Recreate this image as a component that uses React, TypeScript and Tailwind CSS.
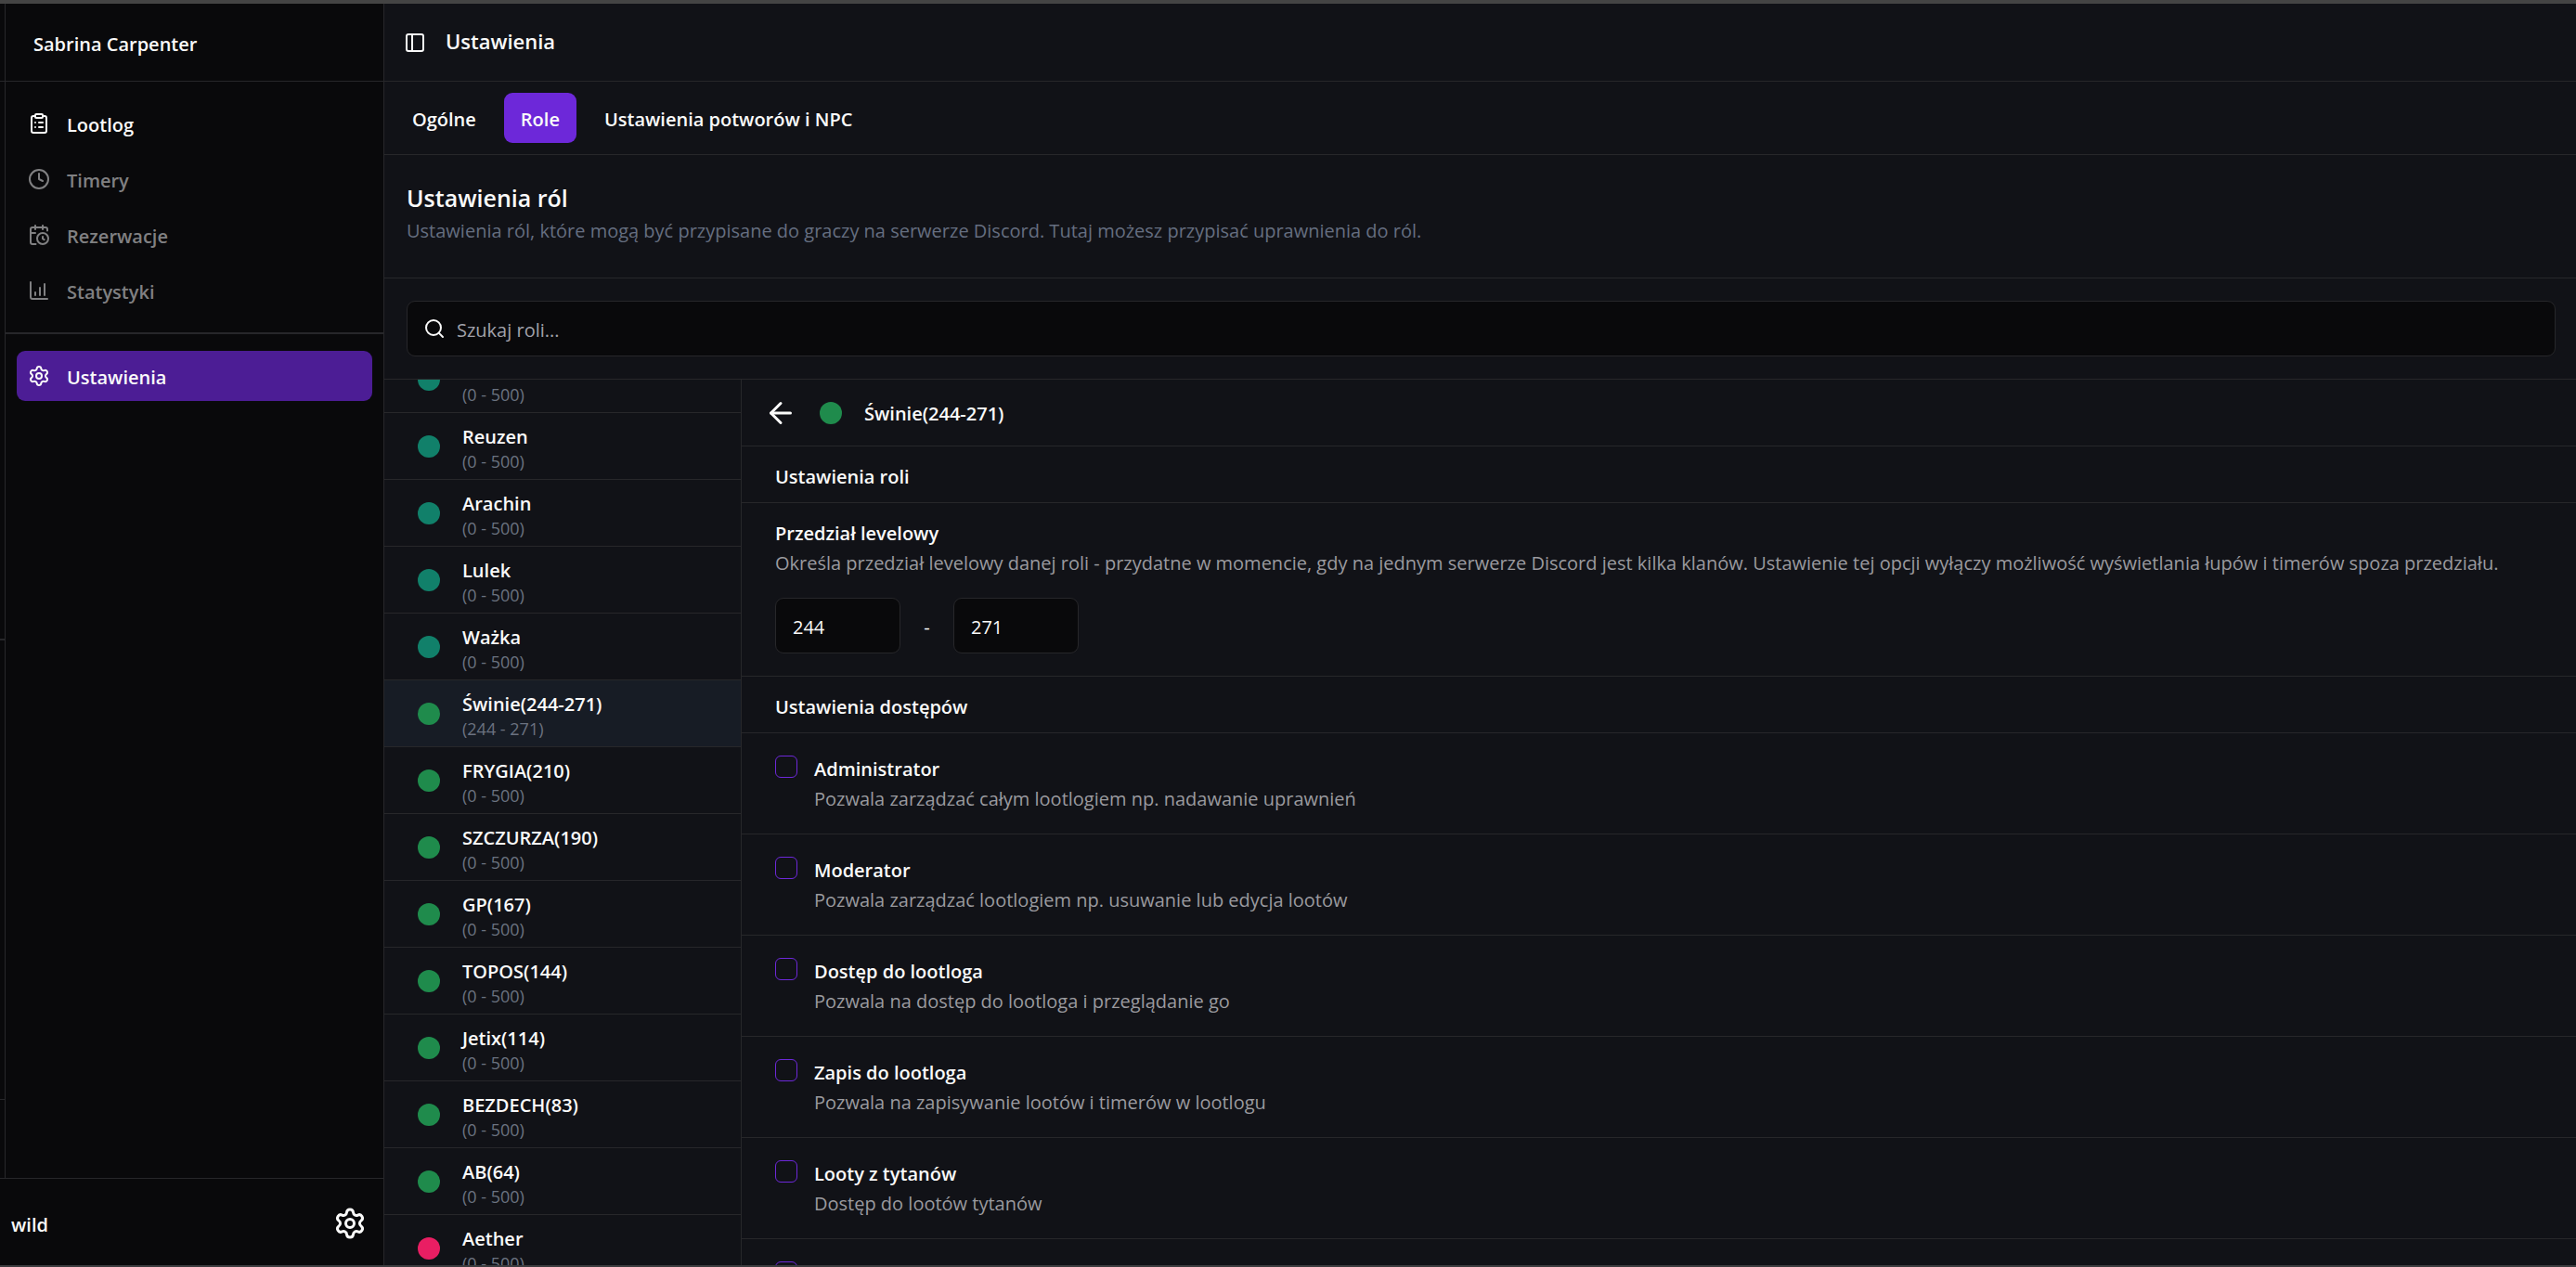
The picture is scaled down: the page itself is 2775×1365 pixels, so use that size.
import * as React from "react";
import {
  ArrowLeft,
  CalendarClock,
  ClipboardList,
  Clock,
  PanelLeft,
  Search,
  Settings,
} from "lucide-react";
import { clsx } from "clsx";

interface NavItem {
  label: string;
  icon: React.ReactNode;
  muted?: boolean;
}

interface Role {
  name: string;
  range: string;
  color: "teal" | "green" | "pink";
}

interface Permission {
  id: string;
  title: string;
  description: string;
}

function StatsIcon() {
  return (
    <svg
      viewBox="0 0 24 24"
      className="size-6 shrink-0"
      fill="none"
      stroke="currentColor"
      strokeWidth="2"
      strokeLinecap="round"
      strokeLinejoin="round"
    >
      <path d="M3 3v16a2 2 0 0 0 2 2h16" />
      <path d="M8 17v-3" />
      <path d="M13 17V9" />
      <path d="M18 17V5" />
    </svg>
  );
}

// Cog used both by the server settings link and the account button.
// Classic six-tooth outline.
function CogIcon({ className }: { className?: string }) {
  return <Settings className={clsx("shrink-0", className)} />;
}

const navItems: NavItem[] = [
  { label: "Lootlog", icon: <ClipboardList className="size-6 shrink-0" /> },
  { label: "Timery", icon: <Clock className="size-6 shrink-0" />, muted: true },
  { label: "Rezerwacje", icon: <CalendarClock className="size-6 shrink-0" />, muted: true },
  { label: "Statystyki", icon: <StatsIcon />, muted: true },
];

const tabs = ["Ogólne", "Role", "Ustawienia potworów i NPC"];

const roles: Role[] = [
  { name: "", range: "(0 - 500)", color: "teal" },
  { name: "Reuzen", range: "(0 - 500)", color: "teal" },
  { name: "Arachin", range: "(0 - 500)", color: "teal" },
  { name: "Lulek", range: "(0 - 500)", color: "teal" },
  { name: "Ważka", range: "(0 - 500)", color: "teal" },
  { name: "Świnie(244-271)", range: "(244 - 271)", color: "green" },
  { name: "FRYGIA(210)", range: "(0 - 500)", color: "green" },
  { name: "SZCZURZA(190)", range: "(0 - 500)", color: "green" },
  { name: "GP(167)", range: "(0 - 500)", color: "green" },
  { name: "TOPOS(144)", range: "(0 - 500)", color: "green" },
  { name: "Jetix(114)", range: "(0 - 500)", color: "green" },
  { name: "BEZDECH(83)", range: "(0 - 500)", color: "green" },
  { name: "AB(64)", range: "(0 - 500)", color: "green" },
  { name: "Aether", range: "(0 - 500)", color: "pink" },
];

const permissions: Permission[] = [
  {
    id: "admin",
    title: "Administrator",
    description: "Pozwala zarządzać całym lootlogiem np. nadawanie uprawnień",
  },
  {
    id: "moderator",
    title: "Moderator",
    description: "Pozwala zarządzać lootlogiem np. usuwanie lub edycja lootów",
  },
  {
    id: "read",
    title: "Dostęp do lootloga",
    description: "Pozwala na dostęp do lootloga i przeglądanie go",
  },
  {
    id: "write",
    title: "Zapis do lootloga",
    description: "Pozwala na zapisywanie lootów i timerów w lootlogu",
  },
  {
    id: "titans",
    title: "Looty z tytanów",
    description: "Dostęp do lootów tytanów",
  },
  { id: "next", title: "", description: "" },
];

const dotColors = {
  teal: "bg-[#11806a]",
  green: "bg-[#1f8b4c]",
  pink: "bg-[#e91e63]",
};

function RoleDot({ color }: { color: Role["color"] }) {
  return <span className={clsx("size-6 shrink-0 rounded-full", dotColors[color])} />;
}

function Sidebar() {
  return (
    <aside className="flex w-[414px] shrink-0 flex-col border-r border-[#27272a] bg-[#09090b]">
      <div className="flex min-h-0 flex-1">
        {/* Edge of the server rail */}
        <div className="flex w-[6px] shrink-0 flex-col border-r border-[#27272a]">
          <div className="h-[84px] border-b border-[#27272a]" />
          <div className="h-[602px] border-b-2 border-[#27272a]" />
          <div className="h-[495px] border-b border-[#27272a]" />
        </div>

        <div className="flex min-w-0 flex-1 flex-col">
          <div className="flex h-[84px] items-center border-b border-[#27272a] px-[30px] pt-1 font-semibold">
            Sabrina Carpenter
          </div>
          <nav className="flex flex-col gap-1.5 px-3 py-[18px]">
            {navItems.map((item) => (
              <a
                key={item.label}
                href="#"
                className={clsx(
                  "flex h-[54px] items-center gap-[18px] rounded-[9px] px-3 font-semibold",
                  item.muted && "text-[#808082]"
                )}
              >
                {item.icon}
                <span className="pt-[3px]">{item.label}</span>
              </a>
            ))}
          </nav>
          <div className="border-t-2 border-[#27272a] px-3 py-[18px]">
            <a
              href="#"
              className="flex h-[54px] items-center gap-[18px] rounded-[9px] bg-[#4c1d95] px-3 font-semibold"
            >
              <CogIcon className="size-6" />
              <span className="pt-[3px]">Ustawienia</span>
            </a>
          </div>
        </div>
      </div>

      <div className="flex h-[94px] shrink-0 items-center justify-between border-t border-[#27272a] pr-[18px] pl-3 pt-0.5 font-semibold">
        <span className="pt-1">wild</span>
        <button type="button" aria-label="Ustawienia konta">
          <CogIcon className="size-9" />
        </button>
      </div>
    </aside>
  );
}

function RoleList() {
  const listRef = React.useRef<HTMLUListElement>(null);

  // Keep the selected role roughly in the middle of the list
  React.useLayoutEffect(() => {
    if (listRef.current) listRef.current.scrollTop = 36;
  }, []);

  return (
    <ul
      ref={listRef}
      className="w-[385px] shrink-0 overflow-y-auto border-r border-[#27272a] [scrollbar-width:none]"
    >
      {roles.map((role, index) => (
        <li key={index} className="border-b border-[#27272a]">
          <button
            type="button"
            className={clsx(
              "flex h-[71px] w-full items-center gap-6 px-9 text-left",
              role.name.startsWith("Świnie") && "bg-[#171c25]"
            )}
          >
            <RoleDot color={role.color} />
            <span className="flex flex-col">
              <span className="h-8 leading-8 font-semibold">{role.name}</span>
              <span className="text-[18px] leading-5 text-[#6b7280]">{role.range}</span>
            </span>
          </button>
        </li>
      ))}
    </ul>
  );
}

function SectionTitle({ children }: { children: React.ReactNode }) {
  return (
    <h3 className="flex h-[61px] items-center border-b border-[#27272a] px-9 pt-1.5 font-semibold">
      {children}
    </h3>
  );
}

function LevelInput({ label, value }: { label: string; value: string }) {
  return (
    <input
      type="text"
      aria-label={label}
      defaultValue={value}
      className="h-[60px] w-[135px] rounded-[9px] border border-[#27272a] bg-[#09090b] px-[18px] pt-0.5 outline-none"
    />
  );
}

function RoleDetails() {
  return (
    <section className="min-w-0 flex-1 overflow-y-auto [scrollbar-width:none]">
      <div className="flex h-[72px] items-center gap-6 border-b border-[#27272a] px-6">
        <button type="button" aria-label="Wróć">
          <ArrowLeft className="size-9" />
        </button>
        <RoleDot color="green" />
        <span className="pt-[3px] font-semibold">Świnie(244-271)</span>
      </div>

      <SectionTitle>Ustawienia roli</SectionTitle>
      <div className="border-b border-[#27272a] px-9 pt-[17px] pb-6">
        <h4 className="leading-8 font-semibold">Przedział levelowy</h4>
        <p className="leading-8 text-[#9a9a9f]">
          Określa przedział levelowy danej roli - przydatne w momencie, gdy na jednym serwerze
          Discord jest kilka klanów. Ustawienie tej opcji wyłączy możliwość wyświetlania łupów i
          timerów spoza przedziału.
        </p>
        <div className="mt-[21px] flex items-center gap-6">
          <LevelInput label="Poziom od" value="244" />
          <span className="w-[9px] pt-[3px] text-center">-</span>
          <LevelInput label="Poziom do" value="271" />
        </div>
      </div>

      <SectionTitle>Ustawienia dostępów</SectionTitle>
      {permissions.map((permission) => (
        <div
          key={permission.id}
          className="flex gap-[18px] border-b border-[#27272a] px-9 pt-[23px] pb-[21px]"
        >
          <input
            id={permission.id}
            type="checkbox"
            aria-label={permission.title || "Uprawnienie"}
            className="mt-px size-6 shrink-0 appearance-none rounded-[6px] border border-[#6d28d9] checked:bg-[#6d28d9]"
          />
          <div>
            <label htmlFor={permission.id} className="block h-8 leading-8 font-semibold">
              {permission.title}
            </label>
            <p className="h-8 leading-8 text-[#9a9a9f]">{permission.description}</p>
          </div>
        </div>
      ))}
    </section>
  );
}

export default function App() {
  const [activeTab, setActiveTab] = React.useState("Role");

  return (
    <div className="flex h-screen flex-col overflow-hidden border-t-4 border-b-2 border-t-[#444444] border-b-[#3c3c3f] bg-[#111217] font-['Open_Sans','Noto_Sans',sans-serif] text-[20px] leading-[30px] text-[#fafafa]">
      <div className="flex min-h-0 flex-1">
        <Sidebar />

        <main className="flex min-w-0 flex-1 flex-col">
          <header className="flex h-[84px] shrink-0 items-center gap-[21px] border-b border-[#27272a] px-[21px]">
            <button type="button" aria-label="Zwiń panel">
              <PanelLeft className="size-6" />
            </button>
            <h1 className="pb-1 text-[22px] font-semibold">Ustawienia</h1>
          </header>

          <div className="flex shrink-0 gap-3 border-b border-[#27272a] p-3">
            {tabs.map((tab) => (
              <button
                key={tab}
                type="button"
                onClick={() => setActiveTab(tab)}
                className={clsx(
                  "h-[54px] rounded-[9px] px-[18px] pt-[3px] font-semibold",
                  activeTab === tab && "bg-[#6d28d9]"
                )}
              >
                {tab}
              </button>
            ))}
          </div>

          <div className="shrink-0 border-b border-[#27272a] px-6 pt-7 pb-8">
            <h2 className="text-[25px] leading-9 font-semibold">Ustawienia ról</h2>
            <p className="leading-9 text-[#656e80]">
              Ustawienia ról, które mogą być przypisane do graczy na serwerze Discord. Tutaj możesz
              przypisać uprawnienia do ról.
            </p>
          </div>

          <div className="shrink-0 border-b border-[#27272a] py-6 pr-[22px] pl-6">
            <div className="flex h-[60px] items-center gap-3 rounded-[9px] border border-[#27272a] bg-[#09090b] px-[17px]">
              <Search className="size-6 shrink-0" />
              <input
                type="text"
                aria-label="Szukaj roli"
                placeholder="Szukaj roli..."
                className="min-w-0 flex-1 bg-transparent pt-[3px] outline-none placeholder:text-[#a1a1aa]"
              />
            </div>
          </div>

          <div className="flex min-h-0 flex-1">
            <RoleList />
            <RoleDetails />
          </div>
        </main>
      </div>
    </div>
  );
}
